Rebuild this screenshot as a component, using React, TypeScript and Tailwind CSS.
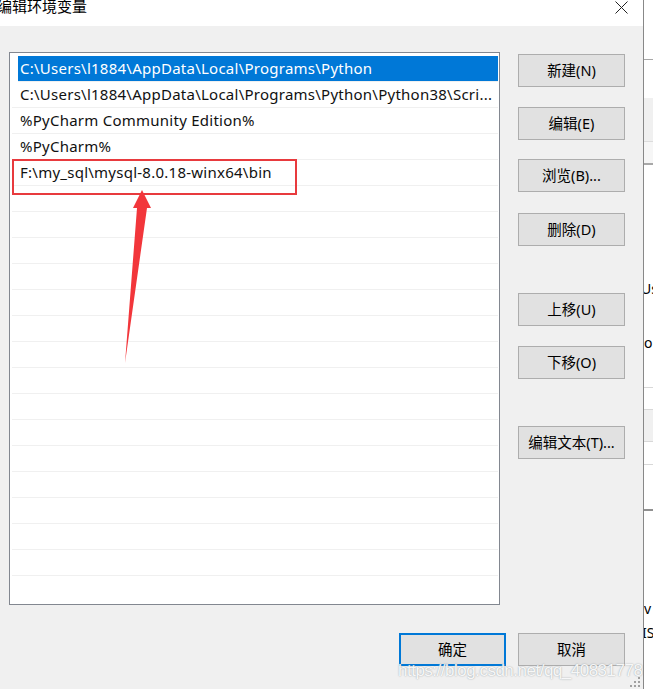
import React from "react";

const PATHS = [
  "C:\\Users\\l1884\\AppData\\Local\\Programs\\Python",
  "C:\\Users\\l1884\\AppData\\Local\\Programs\\Python\\Python38\\Scri...",
  "%PyCharm Community Edition%",
  "%PyCharm%",
  "F:\\my_sql\\mysql-8.0.18-winx64\\bin",
];

const SIDE_BUTTONS = [
  { label: "新建(N)", mt: "mt-[2px]" },
  { label: "编辑(E)", mt: "mt-[20px]" },
  { label: "浏览(B)...", mt: "mt-[19px]" },
  { label: "删除(D)", mt: "mt-[21px]" },
  { label: "上移(U)", mt: "mt-[47px]" },
  { label: "下移(O)", mt: "mt-[20px]" },
  { label: "编辑文本(T)...", mt: "mt-[47px]" },
];

const FONT = "font-['Noto_Sans','Noto_Sans_CJK_SC',sans-serif]";

function WinButton({ label, focused, className = "" }: { label: string; focused?: boolean; className?: string }) {
  return (
    <div
      className={`flex h-[33px] w-[107px] items-center justify-center bg-[#e1e1e1] text-[14.5px] text-black ${
        focused ? "border-2 border-[#0078d7]" : "border border-[#adadad]"
      } ${className}`}
    >
      {label}
    </div>
  );
}

export default function App() {
  const rows = Array.from({ length: 20 }, (_, i) => PATHS[i] ?? "");

  return (
    <div className={`flex h-[689px] w-[653px] overflow-hidden bg-white ${FONT}`}>
      {/* dialog */}
      <div className="relative flex w-[643px] flex-col bg-[#f0f0f0]">
        <div className="flex h-[26px] shrink-0 items-start justify-between bg-white">
          <span className="-ml-[3px] -mt-[4px] text-[15px] leading-[20px] text-black">编辑环境变量</span>
          <svg className="mr-[15px] mt-[1px]" width="13" height="13" viewBox="0 0 13 13">
            <path d="M0.5 0.5 L12.5 12.5 M12.5 0.5 L0.5 12.5" stroke="#222" strokeWidth="1" fill="none" />
          </svg>
        </div>

        <div className="flex pl-[9px] pt-[26px]">
          {/* list */}
          <div className="relative h-[553px] w-[491px] overflow-hidden border border-[#828790] bg-white pl-[2px] pr-[1px] pt-[3px]">
            {rows.map((text, i) => (
              <div
                key={i}
                className={`h-[26px] border-b border-[#f0f0f0] text-[15px] leading-[25px] tracking-[0.25px] ${
                  i === 0 ? "ml-[6px] bg-[#0078d7] pl-[2px] text-white" : "pl-[8px] text-[#111]"
                }`}
              >
                <span className="whitespace-nowrap">{text}</span>
              </div>
            ))}
            <div className="absolute left-[2px] top-[106px] h-[36px] w-[285px] border-2 border-[#e83a3e]" />
            <svg className="absolute left-0 top-0" width="491" height="553" viewBox="9 52 491 553">
              <polygon points="141,189 150,207 146,207 124,362 136,207 132,207" fill="#f2363b" />
            </svg>
          </div>

          {/* side buttons */}
          <div className="ml-[18px] flex flex-col">
            {SIDE_BUTTONS.map((b) => (
              <WinButton key={b.label} label={b.label} className={b.mt} />
            ))}
          </div>
        </div>

        <div className="mt-[28px] flex justify-end gap-[12px] pr-[18px]">
          <WinButton label="确定" focused />
          <WinButton label="取消" />
        </div>

        <div className="absolute left-[398px] top-[660px] whitespace-nowrap font-['Liberation_Sans',sans-serif] text-[17px] leading-[22px] tracking-[-0.5px] text-white/90 [text-shadow:0_0_1.5px_#8a9296]">
          https://blog.csdn.net/qq_40831778
        </div>
        <svg className="absolute bottom-[2px] right-[3px]" width="10" height="10" viewBox="0 0 10 10">
          <rect x="8" y="0" width="2" height="2" fill="#a0a0a0" />
          <rect x="4" y="4" width="2" height="2" fill="#a0a0a0" />
          <rect x="8" y="4" width="2" height="2" fill="#a0a0a0" />
          <rect x="0" y="8" width="2" height="2" fill="#a0a0a0" />
          <rect x="4" y="8" width="2" height="2" fill="#a0a0a0" />
          <rect x="8" y="8" width="2" height="2" fill="#a0a0a0" />
        </svg>
      </div>

      <div className="w-px shrink-0 bg-[#888]" />

      {/* window behind */}
      <div className="flex w-[9px] shrink-0 flex-col overflow-hidden bg-white text-[14px] text-black">
        <div className="h-[59px] shrink-0" />
        <div className="h-px shrink-0 bg-[#a8a8a8]" />
        <div className="h-[38px] shrink-0" />
        <div className="h-[43px] shrink-0 bg-[#f0f0f0]" />
        <div className="h-px shrink-0 bg-[#dcdcdc]" />
        <div className="h-[21px] shrink-0 bg-[#f6f6f6]" />
        <div className="h-[2px] shrink-0 bg-[#a8a8a8]" />
        <div className="h-[114px] shrink-0" />
        <div className="h-[20px] shrink-0 leading-[20px] -ml-[3px]">Us</div>
        <div className="h-[34px] shrink-0" />
        <div className="h-[20px] shrink-0 leading-[20px]">o</div>
        <div className="h-[34px] shrink-0" />
        <div className="h-px shrink-0 bg-[#d8d8d8]" />
        <div className="h-[21px] shrink-0" />
        <div className="h-[33px] shrink-0 border-y border-[#d8d8d8] bg-[#f0f0f0]" />
        <div className="h-[22px] shrink-0" />
        <div className="h-px shrink-0 bg-[#d8d8d8]" />
        <div className="h-[44px] shrink-0" />
        <div className="h-[2px] shrink-0 bg-[#909090]" />
        <div className="h-[88px] shrink-0" />
        <div className="h-[20px] shrink-0 leading-[20px]">v</div>
        <div className="h-[4px] shrink-0" />
        <div className="h-[20px] shrink-0 -ml-[2px] leading-[20px]">IS</div>
      </div>
    </div>
  );
}
